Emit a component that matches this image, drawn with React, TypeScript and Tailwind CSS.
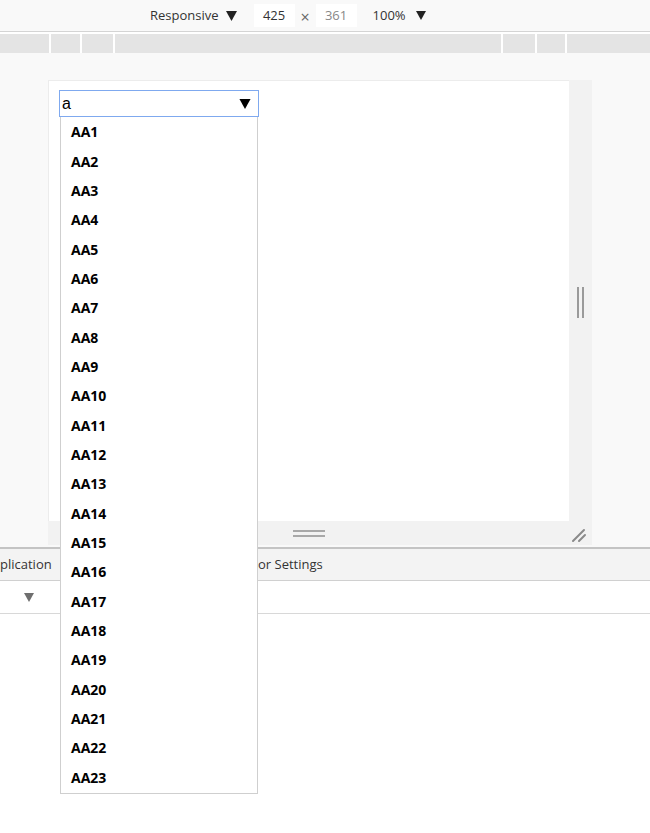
import React from "react";

const items = Array.from({ length: 23 }, (_, i) => `AA${i + 1}`);

// widths of ruler segments between white separators
const rulerSegs = ["w-[49px]", "w-[29px]", "w-[31px]", "w-[386px]", "w-[32px]", "w-[28px]", "flex-1"];

function Caret({ className }: { className?: string }) {
  return (
    <svg viewBox="0 0 10 9" className={className} fill="currentColor">
      <path d="M0 0h10L5 9z" />
    </svg>
  );
}

export default function App() {
  return (
    <div
      className="w-[650px] h-[833px] overflow-hidden bg-white flex flex-col text-[#333]"
      style={{ fontFamily: '"Open Sans", "Noto Sans", sans-serif' }}
    >
      {/* device toolbar */}
      <div className="h-[32px] shrink-0 bg-[#f9f9f9] border-b border-[#d4d4d4] flex items-center pl-[150px] text-[13px] text-[#333]">
        <span>Responsive</span>
        <Caret className="w-[11px] h-[10px] ml-[7px] text-[#222]" />
        <div className="ml-[17px] w-[41px] h-[23px] bg-white flex items-center justify-center">425</div>
        <span className="w-[21px] text-center text-[#666] text-[16px] leading-none pt-[2px]">×</span>
        <div className="w-[41px] h-[23px] bg-white flex items-center justify-center text-[#888]">361</div>
        <span className="ml-[16px]">100%</span>
        <Caret className="w-[10px] h-[9px] ml-[10px] text-[#222]" />
      </div>

      {/* ruler */}
      <div className="mt-[2px] h-[19px] shrink-0 flex gap-[2px] bg-white">
        {rulerSegs.map((w, i) => (
          <div key={i} className={`${w} bg-[#e4e4e4]`} />
        ))}
      </div>

      {/* viewport area */}
      <div className="h-[494px] shrink-0 bg-[#f9f9f9] pt-[27px] pl-[48px]">
        <div className="w-[544px] flex flex-col">
          <div className="flex">
            <div className="w-[521px] h-[441px] bg-white border-t border-l border-[#ececec] pt-[9px] pl-[10px]">
              <div className="relative w-[200px]">
                <div
                  className="h-[27px] border border-[#7fa9ef] flex items-center justify-between pl-[2px] pr-[7px] text-black text-[16px]"
                  style={{ fontFamily: '"Liberation Sans", Arial, sans-serif' }}
                >
                  <span>a</span>
                  <Caret className="w-[12px] h-[10px] text-black" />
                </div>
                <div className="absolute left-[1px] top-full z-10 w-[198px] bg-white border border-[#cfcfcf] border-t-0 pb-[1px]">
                  {items.map((t) => (
                    <div key={t} className="h-[29.35px] flex items-center pl-[10px] text-[14px] font-bold text-black">
                      {t}
                    </div>
                  ))}
                </div>
              </div>
            </div>
            <div className="w-[23px] bg-[#f2f2f2] flex items-start justify-center pt-[207px]">
              <div className="flex gap-[3px]">
                <div className="w-[2px] h-[31px] bg-[#9a9a9a]" />
                <div className="w-[2px] h-[31px] bg-[#9a9a9a]" />
              </div>
            </div>
          </div>
          <div className="h-[24px] bg-[#f2f2f2] flex items-center">
            <div className="flex-1 flex flex-col gap-[3px] pl-[245px]">
              <div className="w-[32px] h-[2px] bg-[#a8a8a8]" />
              <div className="w-[32px] h-[2px] bg-[#a8a8a8]" />
            </div>
            <svg
              viewBox="0 0 16 16"
              className="w-[16px] h-[16px] mr-[5px] mt-[4px]"
              stroke="#8a8a8a"
              strokeWidth="2"
              strokeLinecap="round"
            >
              <path d="M2 14L13 3M8 14L14 8" />
            </svg>
          </div>
        </div>
      </div>

      {/* devtools panel */}
      <div className="border-t-2 border-[#c4c4c4]">
        <div className="h-[32px] bg-[#f3f3f3] border-b border-[#d0d0d0] flex items-center text-[13px] text-[#333]">
          <span className="w-[57px]">plication</span>
          <span className="ml-[201px]">or Settings</span>
        </div>
        <div className="h-[33px] border-b border-[#d8d8d8] flex items-center pl-[24px]">
          <Caret className="w-[10px] h-[9px] text-[#6f6f6f]" />
        </div>
      </div>
    </div>
  );
}
